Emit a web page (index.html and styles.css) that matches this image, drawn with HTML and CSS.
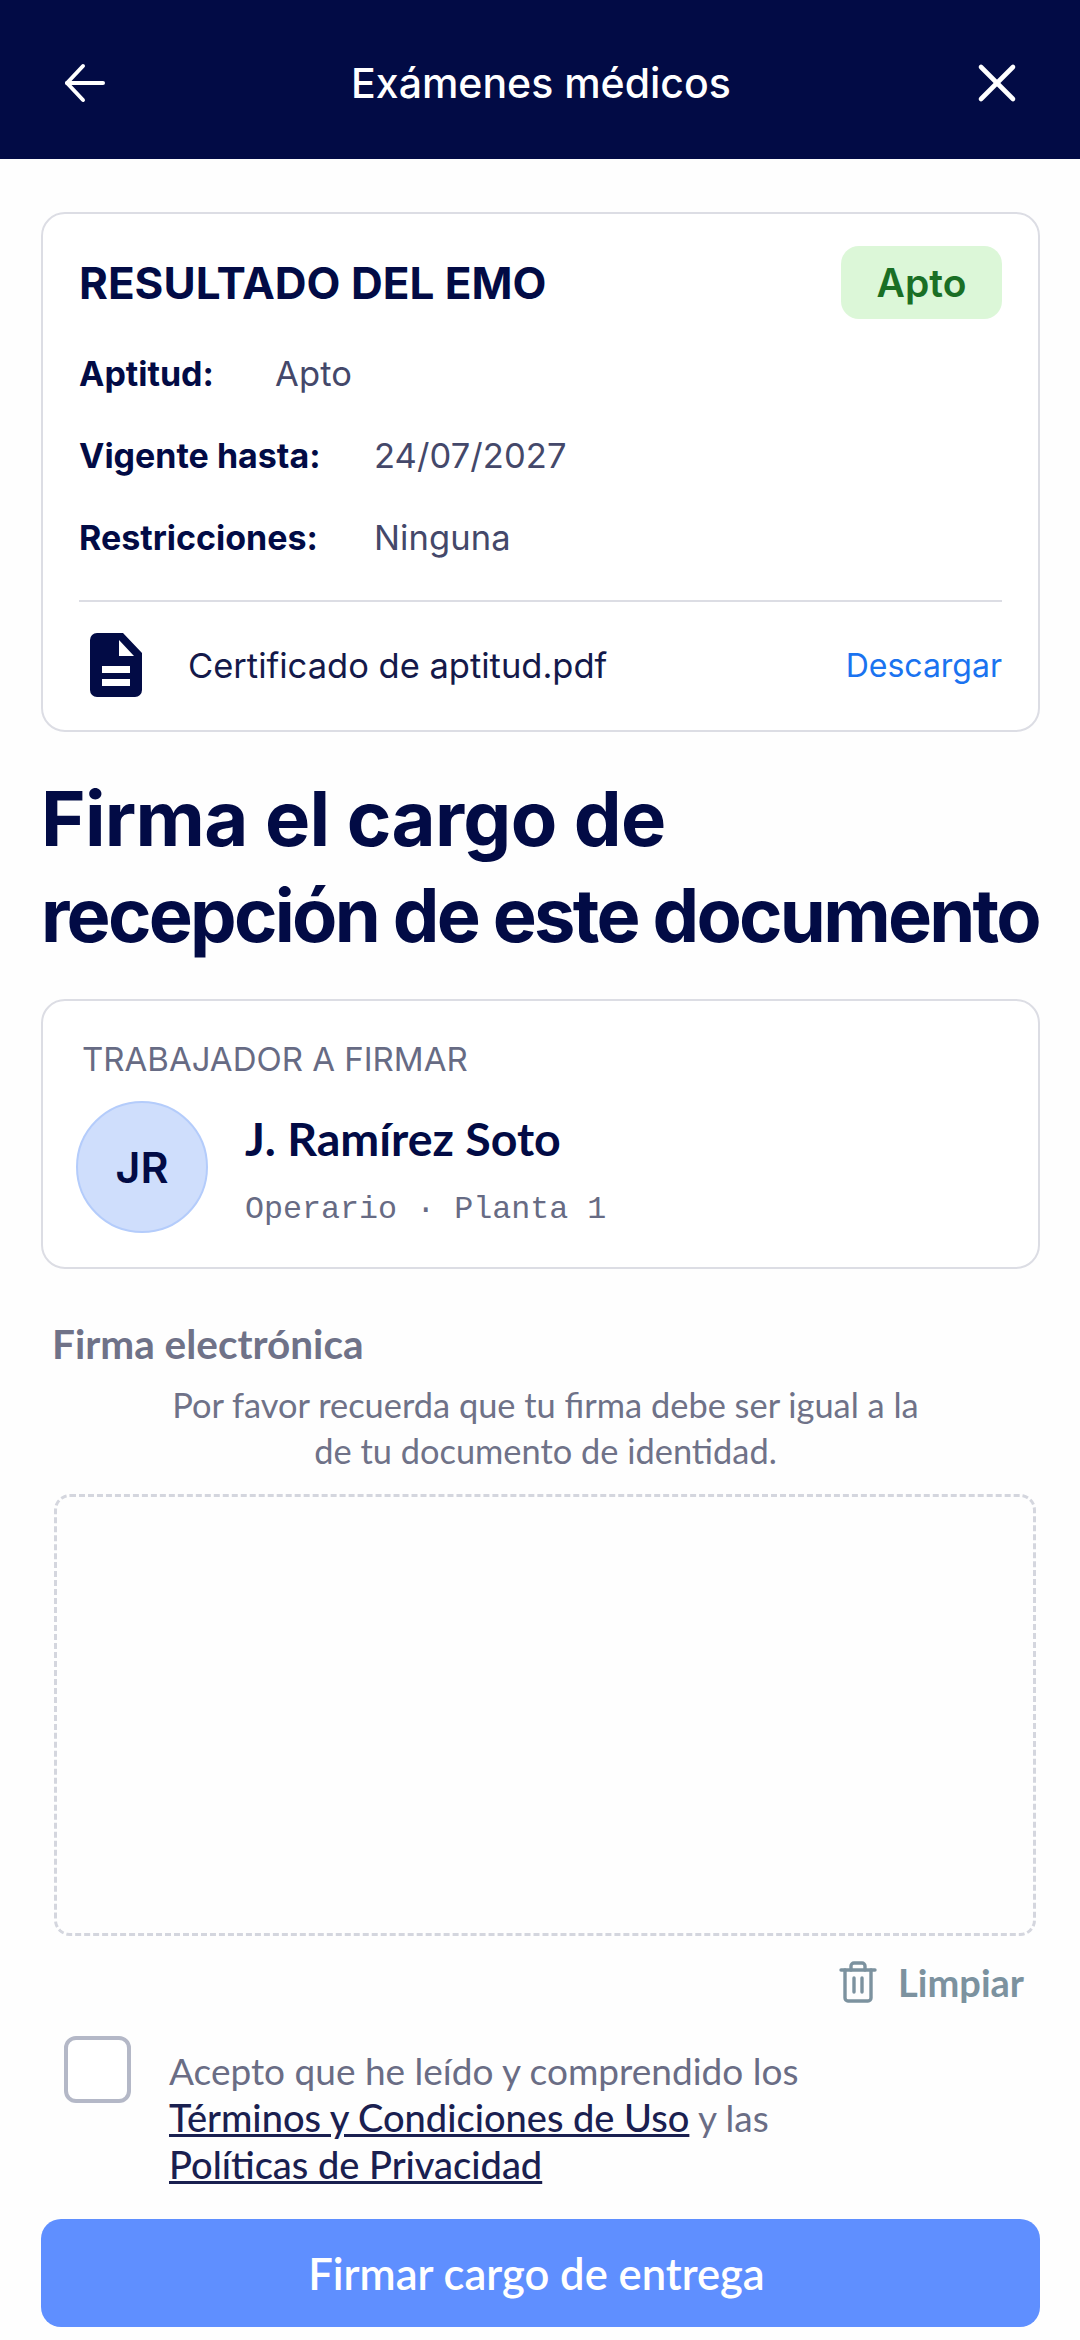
FILE: index.html
```html
<!DOCTYPE html>
<html lang="es">
<head>
    <meta charset="UTF-8">
    <meta name="viewport" content="width=device-width, initial-scale=1.0">
    <title>Exámenes médicos</title>
    <link rel="stylesheet" href="styles.css">
</head>
<body>

    <!-- Barra superior -->
    <header class="top-bar">
        <svg class="top-icon" viewBox="0 0 44 44" fill="none" stroke="#fff" stroke-width="4" stroke-linecap="round" stroke-linejoin="round">
            <path d="M40 22H4"/>
            <path d="M20 5L4 22l16 17"/>
        </svg>
        <span class="top-title">Exámenes médicos</span>
        <svg class="top-icon" viewBox="0 0 44 44" fill="none" stroke="#fff" stroke-width="4.6" stroke-linecap="round">
            <path d="M6 6l32 32"/>
            <path d="M38 6L6 38"/>
        </svg>
    </header>

    <main class="content">

        <!-- Resultado -->
        <section class="card result-card">
            <div class="result-head">
                <h2 class="result-title">RESULTADO DEL EMO</h2>
                <span class="badge">Apto</span>
            </div>
            <div class="result-row">
                <strong class="row-label row-label-short">Aptitud:</strong>
                <span class="row-value">Apto</span>
            </div>
            <div class="result-row">
                <strong class="row-label">Vigente hasta:</strong>
                <span class="row-value">24/07/2027</span>
            </div>
            <div class="result-row">
                <strong class="row-label">Restricciones:</strong>
                <span class="row-value">Ninguna</span>
            </div>
            <div class="file-row">
                <svg class="file-icon" viewBox="0 0 52 64">
                    <path fill="#020b45" fill-rule="evenodd" d="M7 0h26l19 20v37a7 7 0 0 1-7 7H7a7 7 0 0 1-7-7V7a7 7 0 0 1 7-7zM29 7v16h15zM12 33v7h28v-7zM12 46v7h28v-7z"/>
                </svg>
                <span class="file-name">Certificado de aptitud.pdf</span>
                <a class="file-link">Descargar</a>
            </div>
        </section>

        <h1 class="page-title"><span class="page-title-first">Firma el cargo de</span><br>recepción de este documento</h1>

        <!-- Trabajador -->
        <section class="card worker-card">
            <div class="worker-label">TRABAJADOR A FIRMAR</div>
            <div class="worker-info">
                <div class="avatar">JR</div>
                <div class="worker-text">
                    <div class="worker-name">J. Ramírez Soto</div>
                    <div class="worker-role">Operario · Planta 1</div>
                </div>
            </div>
        </section>

        <!-- Firma -->
        <h3 class="sign-title">Firma electrónica</h3>
        <p class="sign-help">Por favor recuerda que tu firma debe ser igual a la<br>de tu documento de identidad.</p>
        <div class="sign-box"></div>
        <div class="clear-row">
            <svg class="clear-icon" viewBox="0 0 38 42" fill="none" stroke="#7c929f" stroke-width="3.4" stroke-linecap="round" stroke-linejoin="round">
                <path d="M2 9h34"/>
                <path d="M12 9V5a3 3 0 0 1 3-3h8a3 3 0 0 1 3 3v4"/>
                <path d="M6 9v28a3 3 0 0 0 3 3h20a3 3 0 0 0 3-3V9"/>
                <path d="M15 17v14"/>
                <path d="M23 17v14"/>
            </svg>
            <span class="clear-text">Limpiar</span>
        </div>

        <!-- Aceptacion -->
        <div class="terms">
            <span class="check-box"></span>
            <p class="terms-text">Acepto que he leído y comprendido los<br><a>Términos y Condiciones de Uso</a> y las<br><a>Políticas de Privacidad</a></p>
        </div>

        <button class="submit-button" type="button">Firmar cargo de entrega</button>
    </main>

</body>
</html>
```

FILE: styles.css
```css
* {
    box-sizing: border-box;
}

body {
    margin: 0;
    background-color: #fefefe;
    font-family: Inter, sans-serif;
    color: #020b45;
}

/* Barra superior */
.top-bar {
    height: 159px;
    padding: 6px 61px 0 63px;
    display: flex;
    align-items: center;
    justify-content: space-between;
    background-color: #020b45;
}

.top-icon {
    width: 44px;
    height: 44px;
    flex-shrink: 0;
}

.top-title {
    color: white;
    font-size: 41px;
    font-weight: 500;
}

.content {
    padding: 53px 40px 0 41px;
}

.card {
    background-color: white;
    border: 2px solid #dcdde4;
    border-radius: 24px;
}

/* Resultado */
.result-card {
    height: 520px;
    padding: 32px 36px 0 36px;
}

.result-head {
    display: flex;
    align-items: center;
    justify-content: space-between;
    margin-bottom: 13px;
}

.result-title {
    margin: 0;
    font-size: 44px;
    font-weight: 700;
}

.badge {
    width: 161px;
    height: 73px;
    display: flex;
    align-items: center;
    justify-content: center;
    background-color: #dcf7d8;
    border-radius: 18px;
    color: #1a6f25;
    font-size: 39px;
    font-weight: 600;
}

.result-row {
    height: 82px;
    display: flex;
    align-items: center;
    font-size: 34px;
}

.row-label {
    width: 295px;
    font-weight: 700;
}

.row-label-short {
    width: 196px;
}

.row-value {
    color: #44486a;
    font-size: 34.5px;
    letter-spacing: 0.1px;
}

.file-row {
    margin-top: 22px;
    padding: 31px 0 0 11px;
    display: flex;
    align-items: center;
    border-top: 2px solid #dcdde4;
}

.file-icon {
    width: 52px;
    height: 64px;
    flex-shrink: 0;
    margin-right: 46px;
}

.file-name {
    flex: 1;
    color: #14194a;
    font-size: 34.5px;
}

.file-link {
    color: #1a73f0;
    font-size: 32px;
}

.page-title {
    margin: 38px 0 0 0;
    font-size: 74px;
    line-height: 96px;
    font-weight: 700;
    letter-spacing: -2.75px;
    white-space: nowrap;
}

.page-title-first {
    font-size: 76px;
    letter-spacing: -0.7px;
}

/* Trabajador */
.worker-card {
    height: 270px;
    margin-top: 36px;
    padding: 40px 33px 0 33px;
}

.worker-label {
    margin-left: 6px;
    color: #676b84;
    font-size: 33px;
    line-height: 36px;
}

.worker-info {
    margin-top: 24px;
    display: flex;
    align-items: flex-start;
}

.avatar {
    width: 132px;
    height: 132px;
    flex-shrink: 0;
    margin-right: 37px;
    display: flex;
    align-items: center;
    justify-content: center;
    background-color: #cfdefc;
    border: 2px solid #b4ccfb;
    border-radius: 50%;
    font-size: 43px;
    font-weight: 600;
}

.worker-text {
    padding-top: 12px;
}

.worker-name {
    font-family: Lato, sans-serif;
    font-size: 46.5px;
    font-weight: 700;
    line-height: 50px;
}

.worker-role {
    margin-top: 29px;
    color: #676b84;
    font-family: "Liberation Mono", monospace;
    font-size: 31.7px;
    line-height: 36px;
}

/* Firma */
.sign-title {
    margin: 50px 0 0 11px;
    color: #6f7288;
    font-family: Lato, sans-serif;
    font-size: 40.5px;
    font-weight: 700;
    line-height: 50px;
}

.sign-help {
    margin: 13px 0 0 0;
    padding-left: 10px;
    text-align: center;
    color: #6f7288;
    font-family: Lato, sans-serif;
    font-size: 34.4px;
    line-height: 46px;
}

.sign-box {
    height: 442px;
    margin: 20px 4px 0 13px;
    border: 3px dashed #d4d6de;
    border-radius: 16px;
}

.clear-row {
    margin-top: 23px;
    padding-right: 16px;
    display: flex;
    align-items: center;
    justify-content: flex-end;
}

.clear-icon {
    width: 38px;
    height: 42px;
    margin-right: 21px;
}

.clear-text {
    color: #7c929f;
    font-family: Lato, sans-serif;
    font-size: 38px;
    font-weight: 700;
}

/* Aceptacion */
.terms {
    margin-top: 31px;
    padding-left: 23px;
    display: flex;
    align-items: flex-start;
}

.check-box {
    width: 67px;
    height: 67px;
    flex-shrink: 0;
    margin-right: 38px;
    border: 4px solid #b4b8c7;
    border-radius: 12px;
    background-color: white;
}

.terms-text {
    margin: 11px 0 0 0;
    color: #6a6d85;
    font-family: Lato, sans-serif;
    font-size: 37px;
    line-height: 47px;
}

.terms-text a {
    color: #1a2050;
    font-weight: 500;
    font-size: 38px;
    text-decoration: underline;
}

.submit-button {
    display: block;
    width: 999px;
    height: 108px;
    margin-top: 31px;
    padding: 0 8px 0 0;
    background-color: #5f8fff;
    color: white;
    border: none;
    border-radius: 20px;
    font-family: Lato, sans-serif;
    font-size: 43.5px;
    font-weight: 600;
}
```
